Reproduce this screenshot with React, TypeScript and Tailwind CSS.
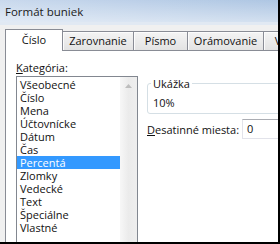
import React from 'react'

const categories = [
  'Všeobecné',
  'Číslo',
  'Mena',
  'Účtovnícke',
  'Dátum',
  'Čas',
  'Percentá',
  'Zlomky',
  'Vedecké',
  'Text',
  'Špeciálne',
  'Vlastné',
]

function InactiveTab({ label, className }: { label: string; className: string }) {
  return (
    <div
      className={`h-[19px] shrink-0 border-t border-r border-[#898c95] bg-linear-to-b from-[#f4f4f4] to-[#e3e3e3] text-center leading-[18px] shadow-[inset_1px_1px_0_#fcfcfc] ${className}`}
    >
      {label}
    </div>
  )
}

export default function App() {
  return (
    <div className="h-[244px] w-[280px] overflow-hidden border-r-2 border-b-2 border-black font-['Open_Sans',sans-serif] text-[11px] text-[#111]">
      <div className="flex h-full flex-col overflow-hidden">
        {/* title bar */}
        <div className="h-[22px] shrink-0 bg-[linear-gradient(to_bottom,rgba(255,255,255,0)_0%,rgba(255,255,255,0.45)_100%),linear-gradient(to_right,#c9d9ed,#aec6e3)] pl-[5px] text-[11.5px] leading-[23px] text-[#1b1b1b]">
          Formát buniek
        </div>
        <div className="h-[3px] shrink-0 bg-[#e1e9f3]" />

        {/* client */}
        <div className="flex flex-1 flex-col bg-[#f0f0f0] pt-[4px] pl-[5px]">
          {/* tabs */}
          <div className="relative z-10 flex h-[21px] shrink-0 items-end">
            <div className="-mb-px h-[22px] w-[58px] shrink-0 border border-b-0 border-[#898c95] bg-white text-center leading-[20px]">
              Číslo
            </div>
            <InactiveTab label="Zarovnanie" className="w-[71px]" />
            <InactiveTab label="Písmo" className="w-[54px]" />
            <InactiveTab label="Orámovanie" className="w-[76px]" />
            <InactiveTab label="Vlastné" className="w-[60px]" />
          </div>

          {/* panel */}
          <div className="flex flex-1 border-t border-l border-[#898c95] bg-white pt-[9px] pl-[10px]">
            {/* left column */}
            <div className="flex w-[122px] shrink-0 flex-col">
              <div className="h-[16px] leading-[15px]">
                <span className="underline underline-offset-1">K</span>ategória:
              </div>
              <div className="flex h-[200px] border border-[#828790]">
                <div className="flex-1 pt-px">
                  {categories.map((c) => (
                    <div
                      key={c}
                      className={`h-[13px] pl-[3px] leading-[13px] ${c === 'Percentá' ? 'bg-[#3399ff] text-white' : ''}`}
                    >
                      {c}
                    </div>
                  ))}
                </div>
                <div className="w-[17px] bg-linear-to-r from-[#f7f7f7] via-[#ebebeb] to-[#eeeeee]">
                  <div className="flex h-[17px] items-center justify-center">
                    <svg width="7" height="4" viewBox="0 0 7 4">
                      <path d="M0 4 L3.5 0 L7 4 Z" fill="#bdbdbd" />
                    </svg>
                  </div>
                </div>
              </div>
            </div>

            {/* right column */}
            <div className="ml-[9px] flex w-[160px] shrink-0 flex-col pt-[16px]">
              <fieldset className="rounded-[3px] border border-[#d5dfe5]">
                <legend className="ml-[3px] px-[2px] leading-[15px]">Ukážka</legend>
                <div className="mt-[4px] mb-[3px] pl-[5px] leading-[15px]">10%</div>
              </fieldset>
              <div className="mt-[5px] flex items-center">
                <div className="w-[95px] shrink-0 leading-[15px]">
                  <span className="underline underline-offset-1">D</span>esatinné miesta:
                </div>
                <div className="h-[20px] flex-1 border border-[#e2e3ea] border-t-[#abadb3] bg-white pl-[4px] leading-[17px]">
                  0
                </div>
              </div>
            </div>
          </div>
        </div>
      </div>
    </div>
  )
}
